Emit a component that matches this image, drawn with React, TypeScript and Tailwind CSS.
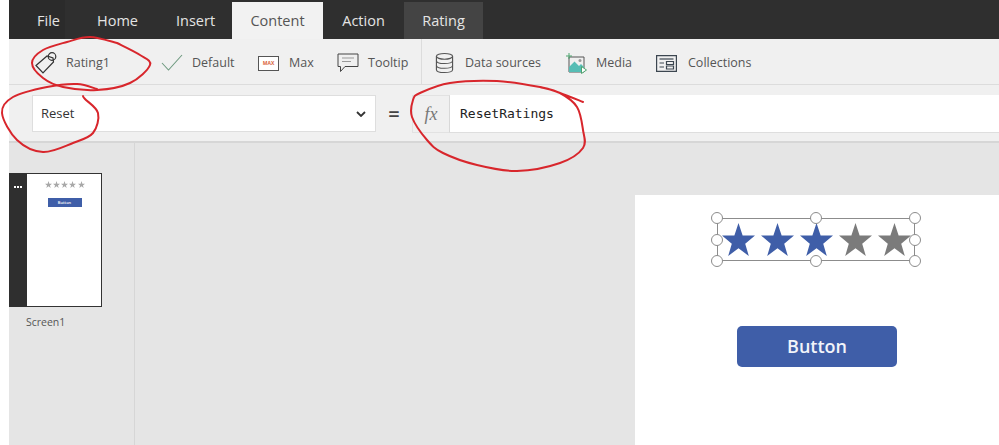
const tabs = [
  { label: "File", className: "w-[56px] pl-[28px] bg-[#2b2b2b]" },
  { label: "Home", className: "w-[83px] pl-[32px]" },
  { label: "Insert", className: "w-[80px] pl-[28px]" },
];

const starPath = "M16 0 L20 12 L32 12 L22.5 20 L26 32 L16 24.5 L6 32 L9.5 20 L0 12 L12 12 Z";

function Star({ className }: { className: string }) {
  return (
    <svg viewBox="0 0 32 32" className={className}>
      <path d={starPath} fill="currentColor" />
    </svg>
  );
}

function TagIcon() {
  return (
    <svg viewBox="0 0 24 24" className="w-[24px] h-[24px] text-[#333]" fill="none" stroke="currentColor" strokeWidth="1.2">
      <path d="M2 14.5 L13 5 L19 7 L19.5 11 L9 22 Z" />
      <circle cx="18" cy="5.5" r="3.8" />
    </svg>
  );
}

function CheckIcon() {
  return (
    <svg viewBox="0 0 22 18" className="w-[22px] h-[18px] text-[#6f9a80]" fill="none" stroke="currentColor" strokeWidth="1.1">
      <path d="M1 9 L7.5 16 L21 1" />
    </svg>
  );
}

function MaxIcon() {
  return (
    <div className="w-[21px] h-[15px] border border-[#555] bg-white flex items-center justify-center">
      <span className="text-[5px] leading-none font-bold text-[#d9623a]">MAX</span>
    </div>
  );
}

function TooltipIcon() {
  return (
    <svg viewBox="0 0 22 20" className="w-[22px] h-[20px] text-[#444]" fill="none" stroke="currentColor" strokeWidth="1">
      <path d="M1 1 H21 V13.5 H8 L3.5 18.5 V13.5 H1 Z" />
      <path d="M5 5 H17 M5 8.5 H14" stroke="#999" />
    </svg>
  );
}

function DatabaseIcon() {
  return (
    <svg viewBox="0 0 20 22" className="w-[19px] h-[22px] text-[#555]" fill="none" stroke="currentColor" strokeWidth="1.2">
      <ellipse cx="10" cy="4" rx="8.5" ry="3" />
      <path d="M1.5 4 V18 C1.5 20 5 21 10 21 C15 21 18.5 20 18.5 18 V4" />
      <path d="M1.5 8.5 C1.5 10.5 5 11.5 10 11.5 C15 11.5 18.5 10.5 18.5 8.5" />
      <path d="M1.5 13.5 C1.5 15.5 5 16.5 10 16.5 C15 16.5 18.5 15.5 18.5 13.5" />
    </svg>
  );
}

function MediaIcon() {
  return (
    <svg viewBox="0 0 21 21" className="w-[21px] h-[21px]" fill="none">
      <path d="M3 4 H18 V19 H3 Z" stroke="#555" strokeWidth="1" />
      <path d="M3 19 V14 L8.5 8.5 L13 13 L15 11 L18 14 V19 Z" fill="#56bdb5" />
      <circle cx="14" cy="7.5" r="1.5" fill="#9a9a9a" />
      <path d="M3 0 V6 M0 3 H6" stroke="#4ca56f" strokeWidth="1" />
      <path d="M15.5 13.5 L20.5 17 L15.5 20.5 Z" fill="#fff" stroke="#4ca56f" strokeWidth="1" />
    </svg>
  );
}

function CollectionsIcon() {
  return (
    <svg viewBox="0 0 21 17" className="w-[21px] h-[17px] text-[#3c4650]" fill="none" stroke="currentColor" strokeWidth="1.2">
      <path d="M0.6 0.6 H20.4 V16.4 H0.6 Z" />
      <path d="M3.5 4 H17.5" />
      <path d="M3.5 8 H8 M3.5 12 H8" />
      <path d="M10.5 6.5 H17.5 V9.5 H10.5 Z M10.5 11 H17.5 V14 H10.5 Z" />
    </svg>
  );
}

// red marker rings drawn over the screenshot
function smooth(points: number[][]) {
  let d = `M${points[0][0]} ${points[0][1]}`;
  for (let i = 0; i < points.length - 1; i++) {
    const p0 = points[Math.max(i - 1, 0)];
    const p1 = points[i];
    const p2 = points[i + 1];
    const p3 = points[Math.min(i + 2, points.length - 1)];
    d += ` C${p1[0] + (p2[0] - p0[0]) / 6} ${p1[1] + (p2[1] - p0[1]) / 6} ${p2[0] - (p3[0] - p1[0]) / 6} ${p2[1] - (p3[1] - p1[1]) / 6} ${p2[0]} ${p2[1]}`;
  }
  return d;
}

const rings = [
  [[117, 43], [90, 37], [67, 42], [43, 50], [32, 63], [43, 78], [63, 87], [97, 90], [130, 83], [150, 65], [140, 55], [117, 43]],
  [[83, 96], [85, 99], [98, 113], [93, 133], [73, 143], [43, 152], [17, 140], [2, 113], [13, 97], [47, 87], [77, 84], [97, 89]],
  [[583, 102], [560, 93], [540, 87], [497, 81], [450, 83], [420, 93], [413, 100], [412, 117], [427, 140], [443, 153], [477, 165], [517, 171], [560, 163], [583, 148], [583, 130], [577, 107], [560, 93], [540, 87]],
];

const handles = [
  "-left-[7px] -top-[7px]",
  "left-[92px] -top-[7px]",
  "-right-[7px] -top-[7px]",
  "-left-[7px] top-[15px]",
  "-right-[7px] top-[15px]",
  "-left-[7px] -bottom-[7px]",
  "left-[92px] -bottom-[7px]",
  "-right-[7px] -bottom-[7px]",
];

export default function App() {
  return (
    <div className="relative w-[999px] h-[445px] overflow-hidden bg-white pl-[9px] font-['Open_Sans',sans-serif] text-[#555]">
      <div className="flex flex-col h-full">
        <div className="h-[39px] shrink-0 bg-[#2f2f2f] flex items-end text-[14.5px] text-[#e4e4e4]">
          {tabs.map((t) => (
            <div key={t.label} className={`h-[39px] pt-[2px] flex items-center ${t.className}`}>
              {t.label}
            </div>
          ))}
          <div className="w-[91px] h-[37px] ml-[4px] bg-[#f2f2f2] text-[#555] flex items-center justify-center">Content</div>
          <div className="w-[81px] h-[39px] pt-[2px] flex items-center justify-center">Action</div>
          <div className="w-[79px] h-[37px] bg-[#444444] flex items-center justify-center">Rating</div>
        </div>

        <div className="h-[46px] shrink-0 bg-[#f0f0f0] border-b border-[#dcdcdc] flex items-center text-[12.5px] pl-[25px] pt-[3px]">
          <TagIcon />
          <span className="ml-[8px] w-[43px]">Rating1</span>
          <div className="ml-[52px]"><CheckIcon /></div>
          <span className="ml-[9px] w-[44px]">Default</span>
          <div className="ml-[22px]"><MaxIcon /></div>
          <span className="ml-[10px] w-[27px]">Max</span>
          <div className="ml-[21px]"><TooltipIcon /></div>
          <span className="ml-[9px] w-[42px]">Tooltip</span>
          <div className="ml-[11px] w-px self-stretch -mt-[3px] bg-[#dcdcdc]" />
          <div className="ml-[13px]"><DatabaseIcon /></div>
          <span className="ml-[11px] w-[76px] whitespace-nowrap">Data sources</span>
          <div className="ml-[25px]"><MediaIcon /></div>
          <span className="ml-[9px] w-[37px]">Media</span>
          <div className="ml-[23px]"><CollectionsIcon /></div>
          <span className="ml-[11px]">Collections</span>
        </div>

        <div className="h-[58px] shrink-0 bg-[#f0f0f0] border-b-2 border-[#d6d6d6] flex items-start pt-[10px] pl-[23px]">
          <div className="w-[344px] h-[37px] bg-white border border-[#dedede] flex items-center justify-between pl-[8px] pr-[9px] text-[13px] text-[#333]">
            <span>Reset</span>
            <svg viewBox="0 0 10 6" className="w-[10px] h-[6px] text-[#333]" fill="none" stroke="currentColor" strokeWidth="1.8">
              <path d="M1 1 L5 5 L9 1" />
            </svg>
          </div>
          <div className="w-[36px] h-[37px] flex items-center justify-center text-[20px] font-semibold text-[#444]">=</div>
          <div className="w-[38px] h-[38px] bg-[#f0f0f0] border border-[#e2e2e2] border-r-[#d8d8d8] flex items-center justify-center font-['Liberation_Serif',serif] italic text-[18px] text-[#777]">
            fx
          </div>
          <div className="flex-1 h-[38px] bg-white border-b border-[#dedede] flex items-center pl-[10px] font-['DejaVu_Sans_Mono',monospace] text-[13px] text-[#222]">
            ResetRatings
          </div>
        </div>

        <div className="flex-1 flex bg-[#e5e5e5]">
          <div className="w-[126px] shrink-0 border-r border-[#d6d6d6] pt-[30px]">
            <div className="flex h-[134px] w-[93px]">
              <div className="w-[18px] bg-[#2f2f2f] flex justify-center pt-[13px] gap-[1px]">
                <span className="w-[2px] h-[2px] bg-white" />
                <span className="w-[2px] h-[2px] bg-white" />
                <span className="w-[2px] h-[2px] bg-white" />
              </div>
              <div className="w-[75px] bg-white border border-l-0 border-[#333] flex flex-col items-center pt-[7px] pl-[1px]">
                <div className="flex gap-[1.25px] text-[#a8a8a8]">
                  <Star className="w-[7px] h-[7px]" />
                  <Star className="w-[7px] h-[7px]" />
                  <Star className="w-[7px] h-[7px]" />
                  <Star className="w-[7px] h-[7px]" />
                  <Star className="w-[7px] h-[7px]" />
                </div>
                <div className="mt-[10px] w-[34px] h-[9px] bg-[#3f5ea8] flex items-center justify-center text-[4px] font-semibold text-white">
                  Button
                </div>
              </div>
            </div>
            <div className="mt-[8px] ml-[17px] text-[10.5px] text-[#555]">Screen1</div>
          </div>

          <div className="flex-1 pl-[500px] pt-[52px]">
            <div className="w-[364px] h-[250px] bg-white pt-[23px] pl-[82px]">
              <div className="relative w-[198px] h-[43px] border border-[#8c8c8c] flex items-center justify-between pl-[4px] pr-[3px]">
                <Star className="w-[33px] h-[33px] text-[#3f5ea8]" />
                <Star className="w-[33px] h-[33px] text-[#3f5ea8]" />
                <Star className="w-[33px] h-[33px] text-[#3f5ea8]" />
                <Star className="w-[33px] h-[33px] text-[#7b7b7b]" />
                <Star className="w-[33px] h-[33px] text-[#7b7b7b]" />
                {handles.map((h) => (
                  <span key={h} className={`absolute w-[12px] h-[12px] rounded-full bg-white border border-[#8c8c8c] ${h}`} />
                ))}
              </div>
              <div className="mt-[65px] ml-[20px] w-[160px] h-[41px] rounded-[5px] bg-[#3f5ea8] flex items-center justify-center text-[18px] font-semibold text-[#f2f4fa]">
                Button
              </div>
            </div>
          </div>
        </div>
      </div>

      <svg className="absolute inset-0 w-[999px] h-[445px] pointer-events-none" viewBox="0 0 999 445" fill="none">
        {rings.map((r, i) => (
          <path key={i} d={smooth(r)} stroke="#d8262c" strokeWidth="2" strokeLinecap="round" />
        ))}
      </svg>
    </div>
  );
}
